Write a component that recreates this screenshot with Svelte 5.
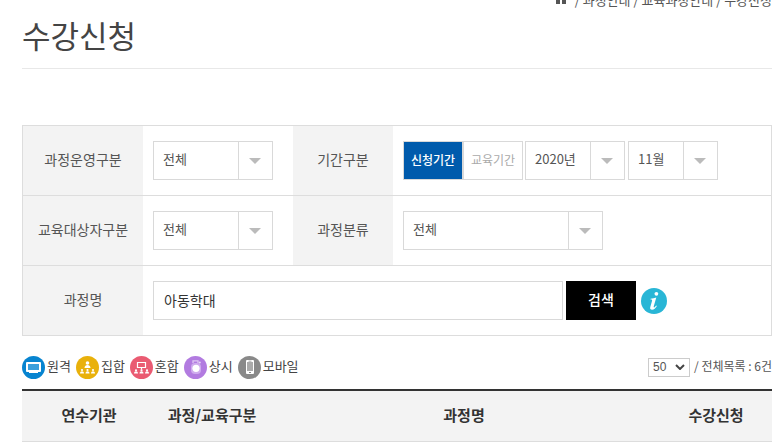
<script lang="ts">
  let operation = $state('전체');
  let target = $state('전체');
  let category = $state('전체');
  let year = $state('2020년');
  let month = $state('11월');
  let period = $state('신청기간');
  let courseName = $state('아동학대');
  let pageSize = $state('50');

  const periods = ['신청기간', '교육기간'];
</script>

{#snippet arrow()}
  <span class="arrow" aria-hidden="true">
    <svg width="12" height="6" viewBox="0 0 12 6"><path d="M0 0h12L6 6z" fill="#bbb" /></svg>
  </span>
{/snippet}

<main class="page">
  <nav class="breadcrumb" aria-label="현재 위치">
    <svg width="12" height="11" viewBox="0 0 12 11" aria-hidden="true">
      <path d="M6 0l6 5h-1v6H7V7H5v4H1V5H0z" fill="#555" />
    </svg>
    <span>/ 과정안내 / 교육과정안내 / 수강신청</span>
  </nav>

  <h1>수강신청</h1>

  <form class="search" onsubmit={(e) => e.preventDefault()}>
    <div class="row">
      <label class="name" for="operation">과정운영구분</label>
      <div class="field">
        <div class="select">
          <select id="operation" bind:value={operation}><option>전체</option></select>
          {@render arrow()}
        </div>
      </div>
      <span class="name" id="period-name">기간구분</span>
      <div class="field">
        <div class="tabs" role="group" aria-labelledby="period-name">
          {#each periods as item}
            <button type="button" class:active={period === item} onclick={() => (period = item)}>{item}</button>
          {/each}
        </div>
        <div class="select year">
          <select aria-label="연도" bind:value={year}><option>2020년</option></select>
          {@render arrow()}
        </div>
        <div class="select month">
          <select aria-label="월" bind:value={month}><option>11월</option></select>
          {@render arrow()}
        </div>
      </div>
    </div>

    <div class="row">
      <label class="name" for="target">교육대상자구분</label>
      <div class="field">
        <div class="select">
          <select id="target" bind:value={target}><option>전체</option></select>
          {@render arrow()}
        </div>
      </div>
      <label class="name" for="category">과정분류</label>
      <div class="field">
        <div class="select category">
          <select id="category" bind:value={category}><option>전체</option></select>
          {@render arrow()}
        </div>
      </div>
    </div>

    <div class="row wide">
      <label class="name" for="course">과정명</label>
      <div class="field">
        <input id="course" type="text" bind:value={courseName} />
        <button type="submit" class="submit">검색</button>
        <button type="button" class="info" aria-label="도움말">
          <svg width="26" height="26" viewBox="0 0 26 26">
            <circle cx="13" cy="13" r="13" fill="#29b6d6" />
            <circle cx="15.4" cy="5.8" r="1.9" fill="#fff" />
            <path d="M9.6 10.7c2-.3 3.8-.9 5.7-1.3l-2.6 9.2c-.2.8.2 1 .8.6.6-.4 1.1-1 1.6-1.7l.8.5c-1.4 2.3-3 3.7-4.8 3.7-1.7 0-2.3-1.1-1.8-2.8l1.7-5.9c.3-1.2.1-1.5-1.5-1.5z" fill="#fff" />
          </svg>
        </button>
      </div>
    </div>
  </form>

  <div class="list-head">
    <ul class="legend">
      <li>
        <svg width="23" height="23" viewBox="0 0 23 23" aria-hidden="true">
          <circle cx="11.5" cy="11.5" r="11.5" fill="#0784d0" />
          <rect x="4" y="6" width="15" height="10" rx="1" fill="#fff" />
          <rect x="6" y="8" width="11" height="6" fill="#3a9fdc" />
          <path d="M7 16h9v1H7z" fill="#fff" />
        </svg>
        <span>원격</span>
      </li>
      <li>
        <svg width="23" height="23" viewBox="0 0 23 23" aria-hidden="true">
          <circle cx="11.5" cy="11.5" r="11.5" fill="#e9b10b" />
          <g fill="#fff">
            <circle cx="11.5" cy="7" r="1.8" />
            <path d="M8.5 12c0-4 6-4 6 0z" />
            <circle cx="6" cy="14" r="1.1" />
            <circle cx="11.5" cy="14" r="1.1" />
            <circle cx="17" cy="14" r="1.1" />
            <path d="M4 17.5c0-3 4-3 4 0zM9.5 17.5c0-3 4-3 4 0zM15 17.5c0-3 4-3 4 0z" />
          </g>
        </svg>
        <span>집합</span>
      </li>
      <li>
        <svg width="23" height="23" viewBox="0 0 23 23" aria-hidden="true">
          <circle cx="11.5" cy="11.5" r="11.5" fill="#ea5b72" />
          <path d="M7.5 6.5h8v5h-8zM11.5 11.5v2" fill="none" stroke="#fff" stroke-width="1.2" />
          <g fill="#fff">
            <circle cx="6" cy="14.3" r="1.1" />
            <circle cx="11.5" cy="14.3" r="1.1" />
            <circle cx="17" cy="14.3" r="1.1" />
            <path d="M4 17.5c0-3 4-3 4 0zM9.5 17.5c0-3 4-3 4 0zM15 17.5c0-3 4-3 4 0z" />
          </g>
        </svg>
        <span>혼합</span>
      </li>
      <li>
        <svg width="23" height="23" viewBox="0 0 23 23" aria-hidden="true">
          <circle cx="11.5" cy="11.5" r="11.5" fill="#b27be0" />
          <path d="M9 7V4.8h5V7" fill="none" stroke="#dfc8f3" stroke-width="1.3" />
          <rect x="7" y="7" width="10" height="11" rx="4" fill="#cfabed" />
          <circle cx="12" cy="12.3" r="3.6" fill="#fff" />
          <circle cx="15.8" cy="6.5" r="1" fill="#ead9f7" />
        </svg>
        <span>상시</span>
      </li>
      <li>
        <svg width="23" height="23" viewBox="0 0 23 23" aria-hidden="true">
          <circle cx="11.5" cy="11.5" r="11.5" fill="#898989" />
          <rect x="8" y="4" width="8" height="14" rx="1" fill="#fff" />
          <rect x="9" y="6" width="6" height="9" fill="#aaa" />
          <path d="M10.5 4.7h3v.8h-3zM11 16h2v1h-2z" fill="#898989" />
        </svg>
        <span>모바일</span>
      </li>
    </ul>

    <div class="total">
      <div class="select size">
        <select aria-label="목록 수" bind:value={pageSize}><option>50</option></select>
        <svg width="10" height="6" viewBox="0 0 10 6" aria-hidden="true">
          <path d="M1 1l4 4 4-4" fill="none" stroke="#444" stroke-width="2" />
        </svg>
      </div>
      <span>/ 전체목록 : 6건</span>
    </div>
  </div>

  <table>
    <colgroup>
      <col class="agency" />
      <col class="type" />
      <col />
      <col class="apply" />
    </colgroup>
    <thead>
      <tr>
        <th scope="col">연수기관</th>
        <th scope="col">과정/교육구분</th>
        <th scope="col">과정명</th>
        <th scope="col">수강신청</th>
      </tr>
    </thead>
  </table>
</main>

<style>
  :global(body) {
    margin: 0;
    background: #fff;
  }

  .page {
    padding: 0 10px 0 22px;
    font-family: 'Noto Sans CJK KR', sans-serif;
    font-size: 14px;
    color: #555;
  }

  .page * {
    box-sizing: border-box;
  }

  button,
  input,
  select {
    margin: 0;
    padding: 0;
    border: 0;
    border-radius: 0;
    background: none;
    font: inherit;
    color: inherit;
  }

  .breadcrumb {
    display: flex;
    align-items: center;
    justify-content: flex-end;
    gap: 8px;
    height: 20px;
    margin-top: -10px;
    font-size: 13px;
    line-height: 20px;
  }

  .breadcrumb svg {
    margin-bottom: 4px;
  }

  h1 {
    height: 59px;
    margin: 0 0 56px;
    border-bottom: 1px solid #e8e8e8;
    font-size: 31px;
    font-weight: 400;
    line-height: 50px;
    color: #444;
  }

  .search {
    border: 1px solid #ddd;
    border-bottom: 0;
  }

  .row {
    display: grid;
    grid-template-columns: 120px 150px 100px 1fr;
    height: 70px;
    border-bottom: 1px solid #ddd;
  }

  .row.wide {
    grid-template-columns: 120px 1fr;
  }

  .name {
    display: flex;
    align-items: center;
    justify-content: center;
    padding-bottom: 4px;
    background: #f3f3f3;
  }

  .field {
    display: flex;
    align-items: center;
    gap: 3px;
    padding: 0 10px;
  }

  .select {
    display: grid;
    flex: none;
    width: 120px;
    height: 39px;
    border: 1px solid #d9d9d9;
  }

  .select select {
    grid-area: 1 / 1;
    padding: 0 0 5px 9px;
    appearance: none;
    font-size: 13px;
    outline: none;
  }

  .arrow {
    grid-area: 1 / 1;
    justify-self: end;
    display: flex;
    align-items: center;
    justify-content: center;
    width: 34px;
    padding-right: 2px;
    border-left: 1px solid #d9d9d9;
    pointer-events: none;
  }

  .select.year {
    width: 100px;
  }

  .select.month {
    width: 90px;
  }

  .select.category {
    width: 200px;
  }

  .tabs {
    display: grid;
    flex: none;
    grid-template-columns: 1fr 1fr;
    width: 120px;
    height: 39px;
    margin-right: -1px;
  }

  .tabs button {
    padding-bottom: 2px;
    border: 1px solid #d9d9d9;
    font-size: 12px;
    color: #aaa;
  }

  .tabs button.active {
    background: #005bac;
    font-weight: 500;
    color: #fff;
  }

  input {
    flex: 0 1 410px;
    min-width: 0;
    height: 39px;
    padding: 0 10px 2px;
    border: 1px solid #d9d9d9;
    font-size: 14px;
    color: #333;
  }

  .submit {
    width: 70px;
    height: 39px;
    padding-bottom: 4px;
    background: #000;
    font-size: 14px;
    font-weight: 500;
    color: #fff;
  }

  .info {
    display: flex;
    margin-left: 2px;
  }

  .list-head {
    display: flex;
    align-items: center;
    justify-content: space-between;
    height: 53px;
    padding-top: 9px;
  }

  .legend {
    display: flex;
    gap: 5px;
    margin: 0;
    padding: 0;
    list-style: none;
    font-size: 13px;
    color: #444;
  }

  .legend li {
    display: flex;
    align-items: center;
    gap: 2px;
  }

  .legend span,
  .total span {
    padding-bottom: 4px;
    line-height: 19px;
  }

  .total {
    display: flex;
    align-items: center;
    gap: 4px;
    font-size: 12px;
  }

  .select.size {
    align-items: center;
    width: 42px;
    height: 19px;
    border-color: #ccc;
  }

  .select.size select {
    padding: 0 0 0 4px;
    font-family: 'Liberation Sans', sans-serif;
    font-size: 12px;
  }

  .select.size svg {
    grid-area: 1 / 1;
    justify-self: end;
    margin-right: 4px;
    pointer-events: none;
  }

  table {
    width: 100%;
    border-collapse: separate;
    border-spacing: 0;
    border-top: 2px solid #333;
    table-layout: fixed;
  }

  .agency {
    width: 134px;
  }

  .type,
  .apply {
    width: 112px;
  }

  th {
    height: 51px;
    padding: 0 0 4px;
    border-bottom: 1px solid #ddd;
    background: #f3f3f3;
    font-size: 15px;
    font-weight: 700;
    color: #333;
  }
</style>
